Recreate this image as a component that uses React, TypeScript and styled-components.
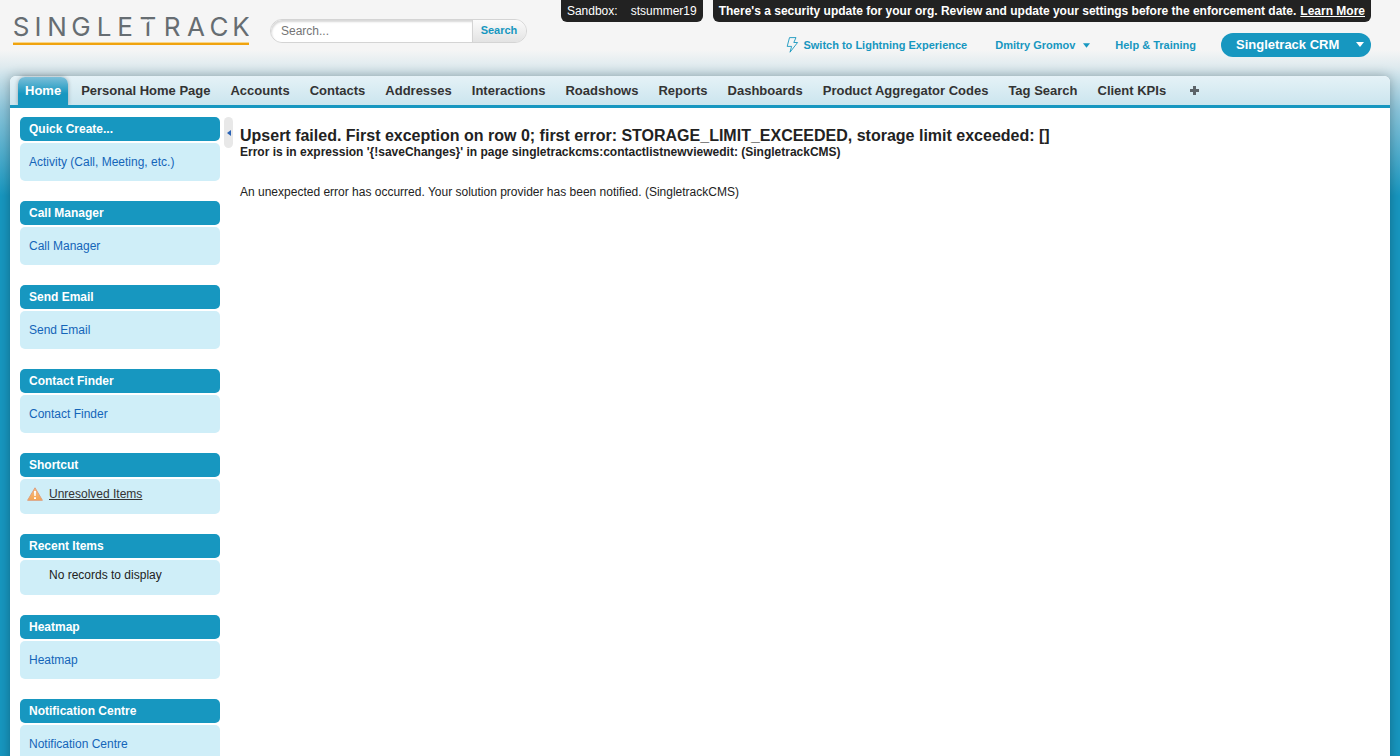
import React from 'react';
import styled, { createGlobalStyle } from 'styled-components';

const BLUE = '#1797c0';

const GlobalStyle = createGlobalStyle`
  *, *::before, *::after { box-sizing: border-box; }
  body {
    margin: 0;
    background: ${BLUE} linear-gradient(to bottom, #f5f5f5 0, #f5f5f5 50px, #e0ebef 66px, #c4dfe9 80px, #8ac5db 110px, ${BLUE} 196px) 0 0 / 100% 196px no-repeat;
    color: #222;
    font-family: "Liberation Sans", Arial, Helvetica, sans-serif;
    font-size: 12px;
  }
  button, input { font-family: inherit; }
`;

const Page = styled.div`
  display: flex;
  flex-direction: column;
  min-height: 100vh;
`;

const Header = styled.header`
  display: flex;
  align-items: flex-start;
  height: 76px;
  padding: 0 29px 0 13px;
`;

const LogoLink = styled.a`
  display: block;
  margin-top: 12px;
  line-height: 0;
`;

const SearchForm = styled.form`
  display: flex;
  width: 257px;
  height: 24px;
  margin: 19px 0 0 21px;
  border: 1px solid #d4d4d4;
  border-radius: 12px;
  overflow: hidden;
`;

const SearchInput = styled.input`
  flex: 1;
  min-width: 0;
  border: 0;
  border-radius: 12px 0 0 12px;
  padding: 0 10px;
  background: #fff;
  box-shadow: inset 1px 2px 2px #d8d8d8;
  font-size: 12px;
  color: #333;
  outline: 0;
  &::placeholder { color: #757575; opacity: 1; }
`;

const SearchButton = styled.button`
  width: 54px;
  padding: 0 1px 2px 0;
  border: 0;
  border-left: 1px solid #d4d4d4;
  background: linear-gradient(#fbfbfb, #e3e3e3);
  color: ${BLUE};
  font-size: 11px;
  font-weight: bold;
`;

const HeaderRight = styled.div`
  display: flex;
  flex-direction: column;
  align-items: flex-end;
  margin-left: auto;
`;

const Banners = styled.div`
  display: flex;
  gap: 10px;
`;

const Banner = styled.div<{ $strong?: boolean }>`
  display: flex;
  gap: ${p => (p.$strong ? 4 : 13)}px;
  height: 22px;
  padding: 0 6px;
  border-radius: 0 0 6px 6px;
  background: #222;
  color: #fff;
  line-height: 22px;
  white-space: nowrap;
  font-weight: ${p => (p.$strong ? 'bold' : 'normal')};
  a { color: #fff; }
`;

const UserNav = styled.nav`
  display: flex;
  align-items: center;
  height: 24px;
  margin-top: 11px;
  gap: 25px;
`;

const HeaderLink = styled.a`
  display: flex;
  align-items: center;
  gap: 4px;
  color: ${BLUE};
  font-size: 11px;
  font-weight: bold;
  text-decoration: none;
  white-space: nowrap;
`;

const UserMenu = styled.button`
  display: flex;
  align-items: center;
  gap: 8px;
  border: 0;
  padding: 0 0 0 3px;
  background: none;
  color: ${BLUE};
  font-size: 11px;
  font-weight: bold;
  white-space: nowrap;
`;

const AppMenu = styled.button`
  display: flex;
  align-items: center;
  justify-content: space-between;
  width: 150px;
  height: 24px;
  padding: 0 7px 1px 15px;
  border: 0;
  border-radius: 12px;
  background: ${BLUE};
  color: #fff;
  font-size: 13px;
  font-weight: bold;
`;

const Panel = styled.div`
  display: flex;
  flex-direction: column;
  flex: 1;
  margin: 0 10px;
  border-radius: 6px 6px 0 0;
  background: #fff;
  box-shadow: 0 0 12px rgba(0, 0, 0, 0.3);
`;

const TabBar = styled.nav`
  display: flex;
  align-items: flex-end;
  height: 32px;
  padding-left: 8px;
  border-bottom: 3px solid ${BLUE};
  border-radius: 6px 6px 0 0;
  background: linear-gradient(#e5f2f7, #cbe5ee);
`;

const Tab = styled.a<{ $active?: boolean }>`
  display: flex;
  align-items: center;
  height: 28px;
  margin-right: ${p => (p.$active ? 3 : 0)}px;
  padding: 0 ${p => (p.$active ? 7 : 10)}px 1px;
  border-radius: 7px 7px 0 0;
  background: ${p => (p.$active ? `linear-gradient(#7dbfd9, ${BLUE} 60%)` : 'none')};
  box-shadow: ${p => (p.$active ? '0 0 4px rgba(0, 0, 0, 0.3)' : 'none')};
  color: ${p => (p.$active ? '#fff' : '#333')};
  clip-path: ${p => (p.$active ? 'inset(-5px -5px 0 -5px)' : 'none')};
  font-size: 13px;
  font-weight: bold;
  text-decoration: none;
  white-space: nowrap;
`;

const Columns = styled.div`
  display: flex;
  align-items: flex-start;
  padding: 9px 10px 10px;
`;

const Sidebar = styled.aside`
  display: flex;
  flex-direction: column;
  flex: none;
  gap: 20px;
  width: 200px;
`;

const Module = styled.section`
  display: flex;
  flex-direction: column;
  gap: 2px;
`;

const ModuleTitle = styled.h2`
  margin: 0;
  padding: 0 9px;
  border-radius: 5px;
  background: ${BLUE};
  color: #fff;
  font-size: 12px;
  line-height: 24px;
`;

const ModuleBody = styled.div<{ $list?: boolean }>`
  display: flex;
  gap: 6px;
  height: ${p => (p.$list ? 35 : 38)}px;
  padding: ${p => (p.$list ? '8px 7px' : '12px 9px')};
  border-radius: 5px;
  background: #cfeef8;
  line-height: 14px;
`;

const ModuleLink = styled.a<{ $underlined?: boolean }>`
  color: ${p => (p.$underlined ? '#333' : '#1465b8')};
  text-decoration: ${p => (p.$underlined ? 'underline' : 'none')};
`;

const EmptyText = styled.span`
  padding-left: 22px;
`;

const CollapseButton = styled.button`
  display: flex;
  align-items: center;
  justify-content: center;
  flex: none;
  width: 9px;
  height: 31px;
  margin-left: 4px;
  padding: 0;
  border: 0;
  border-radius: 5px;
  background: #e8e8e8;
`;

const Main = styled.main`
  flex: 1;
  min-width: 0;
  padding: 9px 0 0 7px;
`;

const ErrorTitle = styled.h1`
  margin: 0;
  font-size: 16px;
  line-height: 19px;
`;

const ErrorSource = styled.p`
  margin: 0 0 26px;
  font-weight: bold;
  line-height: 14px;
`;

const ErrorNote = styled.p`
  margin: 0;
  line-height: 14px;
`;

const letters: [string, number][] = [
  ['S', 8], ['I', 25], ['N', 44], ['G', 68], ['L', 91], ['E', 112],
  ['T', 135], ['R', 159], ['A', 183], ['C', 206], ['K', 228],
];

const Logo = () => (
  <svg width="236" height="33" role="img" aria-label="Singletrack">
    <g fill="#666d72" fontFamily="Inter, sans-serif" fontSize="26" textAnchor="middle">
      {letters.map(([letter, x]) => (
        <text key={x} x={x} y="24">{letter}</text>
      ))}
    </g>
    <path d="M133 7.6H137V8.6L133 11.6Z" fill="#f5f5f5" />
    <rect y="30" width="236" height="1" fill="#f7d68b" />
    <rect y="31" width="236" height="2" fill="#f0a30f" />
  </svg>
);

const BoltIcon = () => (
  <svg width="13" height="16" viewBox="0 0 13 16" fill="none" stroke={BLUE} aria-hidden="true">
    <path d="M3.5 .6H10L7.8 5.5H11.6L4 15.2L5.6 9.4H1.2Z" strokeWidth=".9" strokeLinejoin="round" />
  </svg>
);

const CaretDown = ({ width = 7 }: { width?: number }) => (
  <svg width={width} height="5" viewBox="0 0 8 5" fill="currentColor" aria-hidden="true">
    <path d="M0 0H8L4 5Z" />
  </svg>
);

const WarningIcon = () => (
  <svg width="16" height="14" viewBox="0 0 16 14" aria-hidden="true">
    <defs>
      <linearGradient id="warn" x1="0" y1="0" x2="0" y2="1">
        <stop offset="0" stopColor="#f6bd85" />
        <stop offset="1" stopColor="#f5a550" />
      </linearGradient>
    </defs>
    <path d="M8 .8L15.4 13.3H.6Z" fill="url(#warn)" stroke="#dda080" strokeWidth="1" strokeLinejoin="round" />
    <path d="M7 4H9L8.7 9H7.3ZM7 10.2H9V12H7Z" fill="#fff" />
  </svg>
);

const tabs = [
  'Home', 'Personal Home Page', 'Accounts', 'Contacts', 'Addresses', 'Interactions', 'Roadshows',
  'Reports', 'Dashboards', 'Product Aggregator Codes', 'Tag Search', 'Client KPIs',
];

const LinkModule = ({ title, link }: { title: string; link: string }) => (
  <Module>
    <ModuleTitle>{title}</ModuleTitle>
    <ModuleBody><ModuleLink href="#">{link}</ModuleLink></ModuleBody>
  </Module>
);

export default function App() {
  return (
    <Page>
      <GlobalStyle />
      <Header>
        <LogoLink href="#"><Logo /></LogoLink>
        <SearchForm role="search">
          <SearchInput type="text" placeholder="Search..." aria-label="Search" />
          <SearchButton type="button">Search</SearchButton>
        </SearchForm>
        <HeaderRight>
          <Banners>
            <Banner><span>Sandbox:</span><span>stsummer19</span></Banner>
            <Banner $strong>
              <span>There's a security update for your org. Review and update your settings before the enforcement date.</span>
              <a href="#">Learn More</a>
            </Banner>
          </Banners>
          <UserNav>
            <HeaderLink href="#"><BoltIcon />Switch to Lightning Experience</HeaderLink>
            <UserMenu type="button">Dmitry Gromov<CaretDown /></UserMenu>
            <HeaderLink href="#">Help &amp; Training</HeaderLink>
            <AppMenu type="button">Singletrack CRM<CaretDown width={8} /></AppMenu>
          </UserNav>
        </HeaderRight>
      </Header>
      <Panel>
        <TabBar>
          {tabs.map((tab, i) => <Tab key={tab} href="#" $active={i === 0}>{tab}</Tab>)}
          <Tab href="#" aria-label="All tabs">
            <svg width="18" height="9" viewBox="-4 0 18 9" aria-hidden="true">
              <path d="M3 0H6V3H9V6H6V9H3V6H0V3H3Z" fill="#5c6368" />
            </svg>
          </Tab>
        </TabBar>
        <Columns>
          <Sidebar>
            <LinkModule title="Quick Create..." link="Activity (Call, Meeting, etc.)" />
            <LinkModule title="Call Manager" link="Call Manager" />
            <LinkModule title="Send Email" link="Send Email" />
            <LinkModule title="Contact Finder" link="Contact Finder" />
            <Module>
              <ModuleTitle>Shortcut</ModuleTitle>
              <ModuleBody $list>
                <WarningIcon />
                <ModuleLink href="#" $underlined>Unresolved Items</ModuleLink>
              </ModuleBody>
            </Module>
            <Module>
              <ModuleTitle>Recent Items</ModuleTitle>
              <ModuleBody $list><EmptyText>No records to display</EmptyText></ModuleBody>
            </Module>
            <LinkModule title="Heatmap" link="Heatmap" />
            <LinkModule title="Notification Centre" link="Notification Centre" />
          </Sidebar>
          <CollapseButton type="button" aria-label="Collapse sidebar">
            <svg width="4" height="6" viewBox="0 0 4 6" aria-hidden="true"><path d="M4 0V6L0 3Z" fill="#2a63b5" /></svg>
          </CollapseButton>
          <Main>
            <ErrorTitle>Upsert failed. First exception on row 0; first error: STORAGE_LIMIT_EXCEEDED, storage limit exceeded: []</ErrorTitle>
            <ErrorSource>{"Error is in expression '{!saveChanges}' in page singletrackcms:contactlistnewviewedit: (SingletrackCMS)"}</ErrorSource>
            <ErrorNote>An unexpected error has occurred. Your solution provider has been notified. (SingletrackCMS)</ErrorNote>
          </Main>
        </Columns>
      </Panel>
    </Page>
  );
}
